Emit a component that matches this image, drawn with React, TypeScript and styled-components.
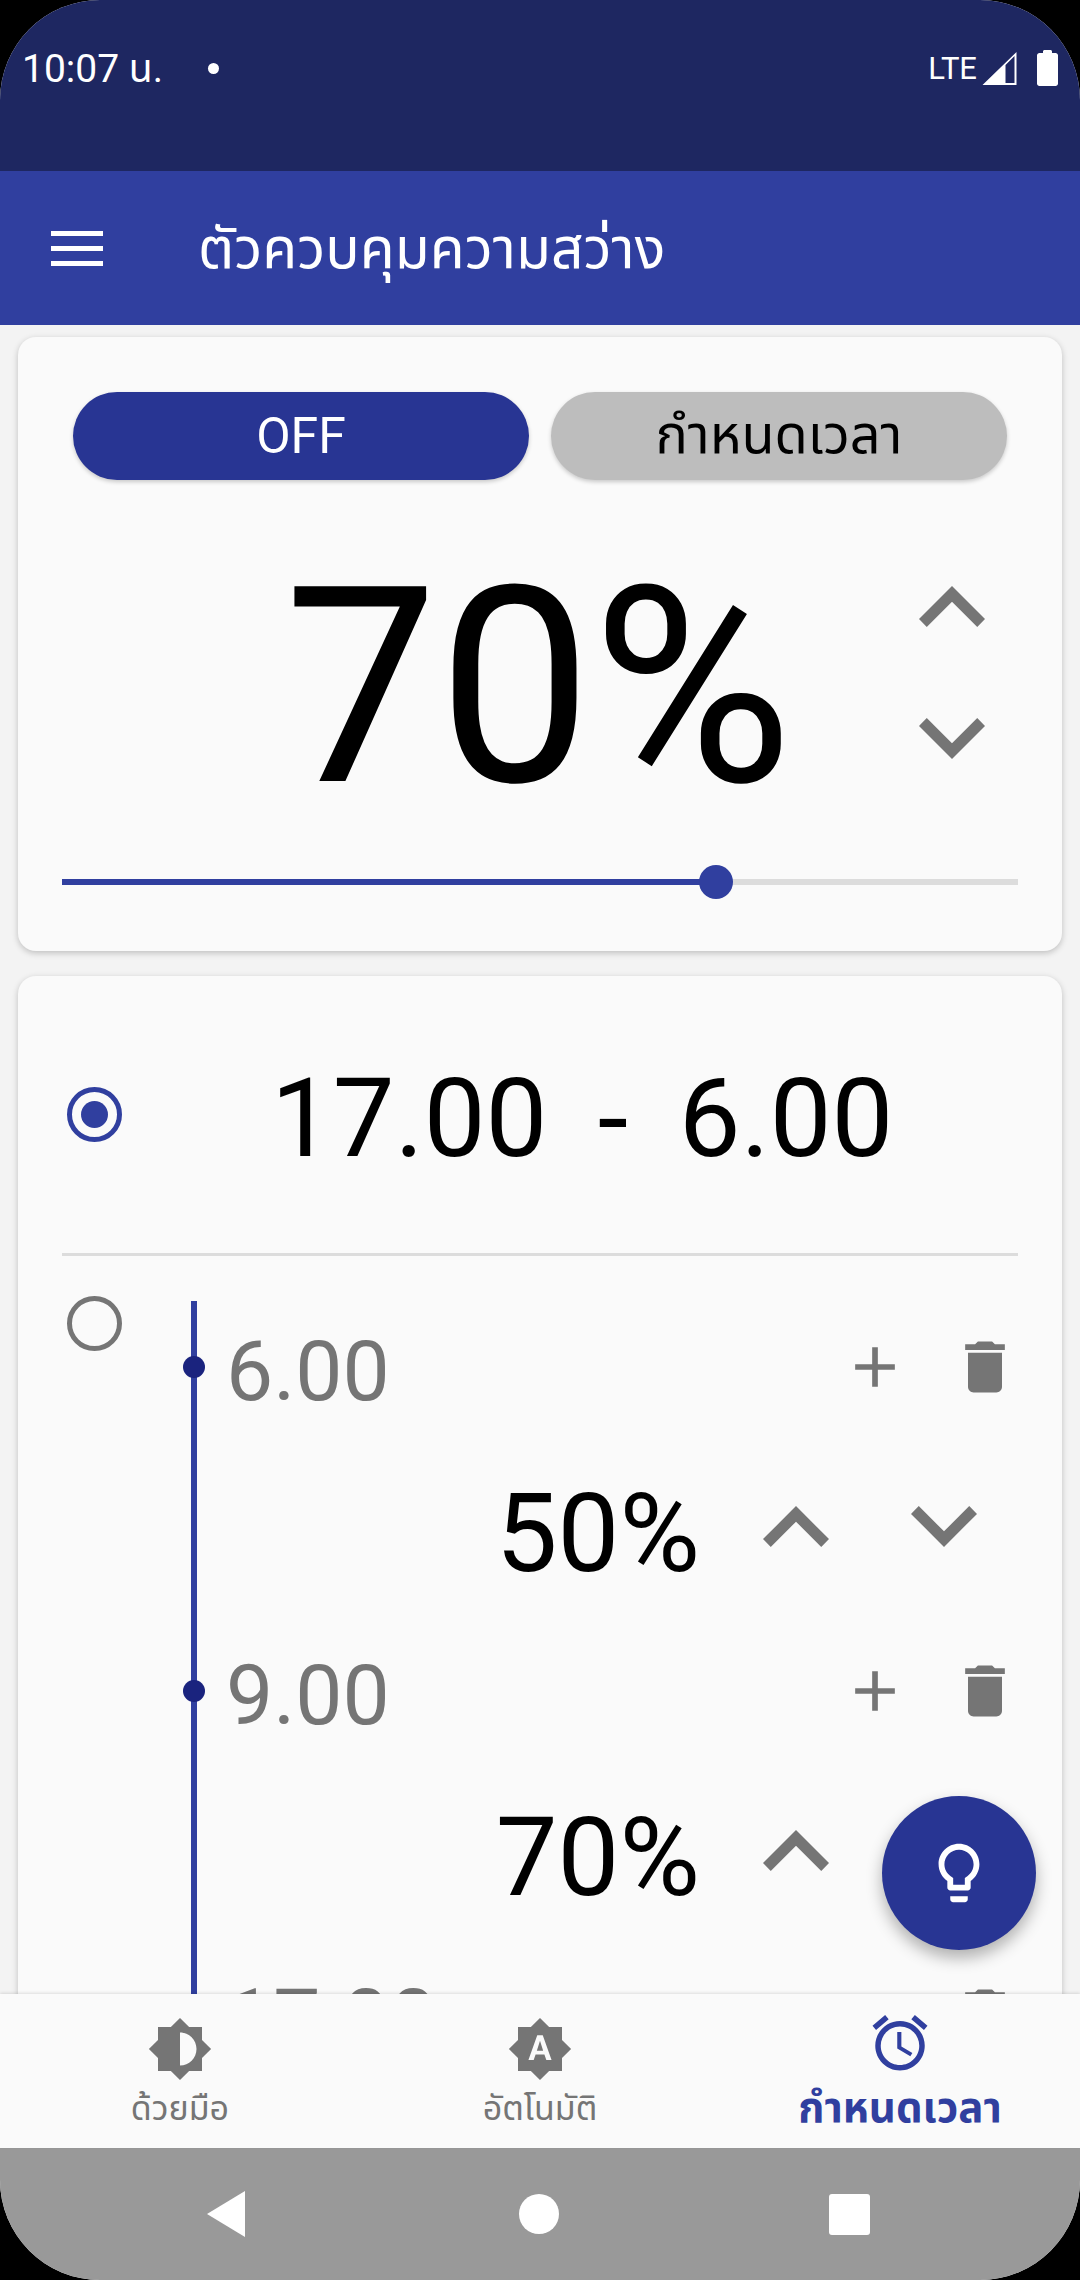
import React from 'react';
import styled, { createGlobalStyle } from 'styled-components';

const colors = {
  statusBar: '#1E2761',
  primary: '#303F9F',
  button: '#283593',
  dot: '#1A237E',
  page: '#F3F3F3',
  card: '#FAFAFA',
  grey: '#757575',
  toggleOff: '#BDBDBD',
  divider: '#DCDCDC',
  systemNav: '#999999',
};

const fontStack = `Roboto, "Noto Sans", "Noto Sans Thai", sans-serif`;

const GlobalStyle = createGlobalStyle`
  html, body {
    margin: 0;
    padding: 0;
    background: #000;
    font-family: ${fontStack};
  }
  * { box-sizing: border-box; }
`;

const Frame = styled.div`
  position: relative;
  width: 1080px;
  height: 2280px;
  display: flex;
  flex-direction: column;
  overflow: hidden;
  border-radius: 100px;
  background: ${colors.page};
`;

const StatusBar = styled.div`
  height: 171px;
  flex: none;
  background: ${colors.statusBar};
  color: #fff;
  display: flex;
  align-items: flex-start;
  justify-content: space-between;
  padding: 46px 22px 0 22px;
`;

const StatusLeft = styled.div`
  display: flex;
  align-items: center;
  font-size: 39px;
  height: 44px;
  padding-top: 4px;
`;

const StatusDot = styled.span`
  width: 11px;
  height: 11px;
  border-radius: 50%;
  background: #fff;
  margin: -4px 0 0 45px;
`;

const StatusRight = styled.div`
  display: flex;
  align-items: center;
  height: 44px;
  font-size: 31px;
  gap: 5px;
`;

const AppBar = styled.div`
  height: 154px;
  flex: none;
  background: ${colors.primary};
  color: #fff;
  display: flex;
  align-items: center;
  padding-left: 51px;
`;

const Hamburger = styled.div`
  width: 52px;
  height: 35px;
  border-top: 5px solid #fff;
  border-bottom: 5px solid #fff;
  display: flex;
  align-items: center;
  margin-right: 95px;
  &::before {
    content: '';
    width: 100%;
    height: 5px;
    background: #fff;
  }
`;

const Title = styled.div`
  font-size: 57px;
  padding-top: 5px;
`;

const Content = styled.div`
  flex: 1;
  min-height: 0;
  overflow: hidden;
  padding: 12px 18px 0;
  display: flex;
  flex-direction: column;
  gap: 25px;
`;

const Card = styled.div`
  background: ${colors.card};
  border-radius: 18px;
  box-shadow: 0 2px 6px rgba(0, 0, 0, 0.22);
  flex: none;
`;

const BrightnessCard = styled(Card)`
  height: 614px;
  padding-top: 55px;
`;

const ToggleRow = styled.div`
  display: flex;
  gap: 22px;
  padding: 0 55px;
`;

const Toggle = styled.div<{ $active?: boolean }>`
  width: 456px;
  height: 88px;
  border-radius: 44px;
  display: flex;
  align-items: center;
  justify-content: center;
  font-size: ${(p) => (p.$active ? '50px' : '54px')};
  background: ${(p) => (p.$active ? colors.button : colors.toggleOff)};
  color: ${(p) => (p.$active ? '#fff' : '#000')};
  box-shadow: 0 2px 4px rgba(0, 0, 0, 0.2);
`;

const BigRow = styled.div`
  height: 290px;
  margin-top: 63px;
  display: flex;
  align-items: center;
  padding-left: 266px;
`;

const BigValue = styled.div`
  width: 540px;
  font-size: 274px;
  line-height: 290px;
  color: #000;
`;

const Steppers = styled.div`
  display: flex;
  flex-direction: column;
  gap: 91px;
  margin: 0 0 32px 95px;
`;

const SliderTrack = styled.div`
  position: relative;
  height: 6px;
  margin: 46px 44px 0;
  background: ${colors.divider};
`;

const SliderFill = styled.div`
  height: 100%;
  background: ${colors.primary};
`;

const SliderThumb = styled.div`
  position: absolute;
  top: -14px;
  width: 34px;
  height: 34px;
  margin-left: -17px;
  border-radius: 50%;
  background: ${colors.primary};
`;

const ScheduleCard = styled(Card)`
  height: 1300px;
  border-radius: 18px 18px 0 0;
`;

const ActiveRange = styled.div`
  height: 280px;
  margin: 0 44px;
  display: flex;
  align-items: center;
  border-bottom: 3px solid ${colors.divider};
`;

const Radio = styled.div<{ $checked?: boolean }>`
  width: 55px;
  height: 55px;
  flex: none;
  border-radius: 50%;
  border: 5px solid ${(p) => (p.$checked ? colors.primary : colors.grey)};
  display: flex;
  align-items: center;
  justify-content: center;
  margin-left: 5px;
  &::after {
    content: '';
    display: ${(p) => (p.$checked ? 'block' : 'none')};
    width: 27px;
    height: 27px;
    border-radius: 50%;
    background: ${colors.primary};
  }
`;

const RangeText = styled.div`
  font-size: 110px;
  word-spacing: -2px;
  color: #000;
  white-space: pre;
  margin-left: 149px;
  padding-top: 8px;
`;

const ScheduleBody = styled.div`
  display: flex;
  padding: 45px 0 0 49px;
`;

const ScheduleRadio = styled(Radio)`
  margin: -5px 69px 0 0;
`;

const Timeline = styled.div`
  flex: 1;
  border-left: 6px solid ${colors.primary};
`;

const TimeRow = styled.div`
  position: relative;
  height: 132px;
  display: flex;
  align-items: center;
  justify-content: space-between;
  padding: 0 43px 0 29px;
  &::before {
    content: '';
    position: absolute;
    left: -14px;
    top: 55px;
    width: 22px;
    height: 22px;
    border-radius: 50%;
    background: ${colors.dot};
  }
`;

const TimeLabel = styled.div`
  font-size: 84px;
  color: ${colors.grey};
  padding-top: 8px;
`;

const TimeActions = styled.div`
  display: flex;
  gap: 42px;
`;

const ValueRow = styled.div`
  height: 192px;
  display: flex;
  align-items: center;
  justify-content: flex-end;
  padding: 0 85px 6px 0;
`;

const ValueText = styled.div`
  font-size: 110px;
  color: #000;
  margin-right: 63px;
  padding-top: 14px;
`;

const ValueSteppers = styled.div`
  display: flex;
  gap: 82px;
`;

const Fab = styled.div`
  position: absolute;
  left: 882px;
  top: 1796px;
  width: 154px;
  height: 154px;
  border-radius: 50%;
  background: ${colors.button};
  display: flex;
  align-items: center;
  justify-content: center;
  box-shadow: 0 8px 16px rgba(0, 0, 0, 0.3);
`;

const BottomNav = styled.div`
  position: relative;
  height: 154px;
  flex: none;
  background: ${colors.card};
  box-shadow: 0 -1px 3px rgba(0, 0, 0, 0.12);
  display: grid;
  grid-template-columns: repeat(3, 1fr);
`;

const NavItem = styled.div<{ $active?: boolean }>`
  display: flex;
  flex-direction: column;
  align-items: center;
  padding-top: ${(p) => (p.$active ? '16px' : '22px')};
  color: ${(p) => (p.$active ? colors.primary : colors.grey)};
  font-size: ${(p) => (p.$active ? '42px' : '34px')};
  font-weight: ${(p) => (p.$active ? 700 : 400)};
`;

const NavLabel = styled.div<{ $active?: boolean }>`
  line-height: 44px;
  margin-top: ${(p) => (p.$active ? '10px' : '4px')};
`;

const SystemNav = styled.div`
  height: 132px;
  flex: none;
  background: ${colors.systemNav};
  display: flex;
  align-items: center;
  justify-content: center;
  gap: 271px;
  padding-right: 3px;
`;

const BackIcon = styled.svg`
  width: 40px;
  height: 46px;
`;

const HomeDot = styled.div`
  width: 40px;
  height: 40px;
  border-radius: 50%;
  background: #fff;
  transform: translateX(1px);
`;

const RecentSquare = styled.div`
  width: 41px;
  height: 41px;
  border-radius: 3px;
  background: #fff;
`;

const Chevron: React.FC<{ down?: boolean }> = ({ down }) => (
  <svg width="66" height="41" viewBox="6 8 12 7.41" fill={colors.grey}>
    <path
      d={down ? 'M12 15.41l-6-6L7.41 8 12 12.58 16.59 8 18 9.41z' : 'M12 8l-6 6 1.41 1.41L12 10.83l4.59 4.58L18 14z'}
    />
  </svg>
);

const PlusIcon = () => (
  <svg width="68" height="68" viewBox="0 0 24 24" fill={colors.grey}>
    <path d="M19 13h-6v6h-2v-6H5v-2h6V5h2v6h6v2z" />
  </svg>
);

const TrashIcon = () => (
  <svg width="68" height="68" viewBox="0 0 24 24" fill={colors.grey}>
    <path d="M6 19c0 1.1.9 2 2 2h8c1.1 0 2-.9 2-2V7H6v12zM19 4h-3.5l-1-1h-5l-1 1H5v2h14V4z" />
  </svg>
);

const schedule = [
  { time: '6.00', value: '50%' },
  { time: '9.00', value: '70%' },
  { time: '17.00' },
];

const App: React.FC = () => {
  return (
    <Frame>
      <GlobalStyle />
      <StatusBar>
        <StatusLeft>
          10:07 น.
          <StatusDot />
        </StatusLeft>
        <StatusRight>
          LTE
          <svg width="35" height="33" viewBox="0 0 34 33" fill="#fff">
            <path fillRule="evenodd" d="M34 0V33H0ZM23 31V13L32 4V31Z" />
          </svg>
          <svg width="21" height="36" viewBox="0 0 21 36" fill="#fff" style={{ marginLeft: 15 }}>
            <path d="M6 3V1.5C6 .7 6.7 0 7.5 0h6c.8 0 1.5.7 1.5 1.5V3h3.5C19.9 3 21 4.1 21 5.5V33.5c0 1.4-1.1 2.5-2.5 2.5h-16C1.100 36 0 34.900 0 33.500V5.500C0 4.100 1.100 3 2.500 3z" />
          </svg>
        </StatusRight>
      </StatusBar>

      <AppBar>
        <Hamburger />
        <Title>ตัวควบคุมความสว่าง</Title>
      </AppBar>

      <Content>
        <BrightnessCard>
          <ToggleRow>
            <Toggle $active>OFF</Toggle>
            <Toggle>กำหนดเวลา</Toggle>
          </ToggleRow>
          <BigRow>
            <BigValue>70%</BigValue>
            <Steppers>
              <Chevron />
              <Chevron down />
            </Steppers>
          </BigRow>
          <SliderTrack>
            <SliderFill style={{ width: '68.4%' }} />
            <SliderThumb style={{ left: '68.4%' }} />
          </SliderTrack>
        </BrightnessCard>

        <ScheduleCard>
          <ActiveRange>
            <Radio $checked />
            <RangeText>17.00  -  6.00</RangeText>
          </ActiveRange>
          <ScheduleBody>
            <ScheduleRadio />
            <Timeline>
              {schedule.map((item) => (
                <React.Fragment key={item.time}>
                  <TimeRow>
                    <TimeLabel>{item.time}</TimeLabel>
                    <TimeActions>
                      <PlusIcon />
                      <TrashIcon />
                    </TimeActions>
                  </TimeRow>
                  {item.value && (
                    <ValueRow>
                      <ValueText>{item.value}</ValueText>
                      <ValueSteppers>
                        <Chevron />
                        <Chevron down />
                      </ValueSteppers>
                    </ValueRow>
                  )}
                </React.Fragment>
              ))}
            </Timeline>
          </ScheduleBody>
        </ScheduleCard>
      </Content>

      <BottomNav>
        <NavItem>
          <svg width="66" height="66" viewBox="0 0 24 24" fill={colors.grey}>
            <path d="M20 15.31L23.31 12 20 8.690V4h-4.690L12 .69 8.690 4H4v4.690L.69 12 4 15.310V20h4.690L12 23.310 15.310 20H20v-4.690zM12 18V6c3.310 0 6 2.690 6 6s-2.690 6-6 6z" />
          </svg>
          <NavLabel>ด้วยมือ</NavLabel>
        </NavItem>
        <NavItem>
          <svg width="66" height="66" viewBox="0 0 24 24" fill={colors.grey}>
            <path d="M10.850 12.650h2.300L12 9l-1.150 3.650zM20 8.690V4h-4.690L12 .69 8.690 4H4v4.690L.69 12 4 15.310V20h4.690L12 23.310 15.310 20H20v-4.690L23.310 12 20 8.690zM14.300 16l-.7-2h-3.200l-.7 2H7.800L11 7h2l3.200 9h-1.900z" />
          </svg>
          <NavLabel>อัตโนมัติ</NavLabel>
        </NavItem>
        <NavItem $active>
          <svg width="66" height="66" viewBox="0 0 24 24" fill={colors.primary}>
            <path d="M22 5.720l-4.600-3.860-1.290 1.530 4.600 3.860L22 5.720zM7.880 3.390L6.600 1.860 2 5.710l1.290 1.530 4.590-3.850zM12.500 8H11v6l4.750 2.850.75-1.230-4-2.370V8zM12 4c-4.970 0-9 4.030-9 9s4.030 9 9 9 9-4.030 9-9-4.030-9-9-9zm0 16c-3.870 0-7-3.130-7-7s3.130-7 7-7 7 3.130 7 7-3.130 7-7 7z" />
          </svg>
          <NavLabel $active>กำหนดเวลา</NavLabel>
        </NavItem>
      </BottomNav>

      <SystemNav>
        <BackIcon viewBox="0 0 40 46" fill="#fff">
          <path d="M38 0V46L0 23z" />
        </BackIcon>
        <HomeDot />
        <RecentSquare />
      </SystemNav>

      <Fab>
        <svg width="70" height="70" viewBox="0 0 24 24" fill="#fff">
          <path d="M9 21c0 .55.45 1 1 1h4c.55 0 1-.45 1-1v-1H9v1zm3-19C8.140 2 5 5.140 5 9c0 2.380 1.190 4.470 3 5.740V17c0 .55.45 1 1 1h6c.55 0 1-.45 1-1v-2.260c1.810-1.270 3-3.360 3-5.740 0-3.860-3.140-7-7-7zm2.850 11.100l-.85.6V16h-4v-2.300l-.85-.6C7.800 12.160 7 10.630 7 9c0-2.760 2.240-5 5-5s5 2.240 5 5c0 1.630-.8 3.160-2.150 4.100z" />
        </svg>
      </Fab>
    </Frame>
  );
};

export default App;
